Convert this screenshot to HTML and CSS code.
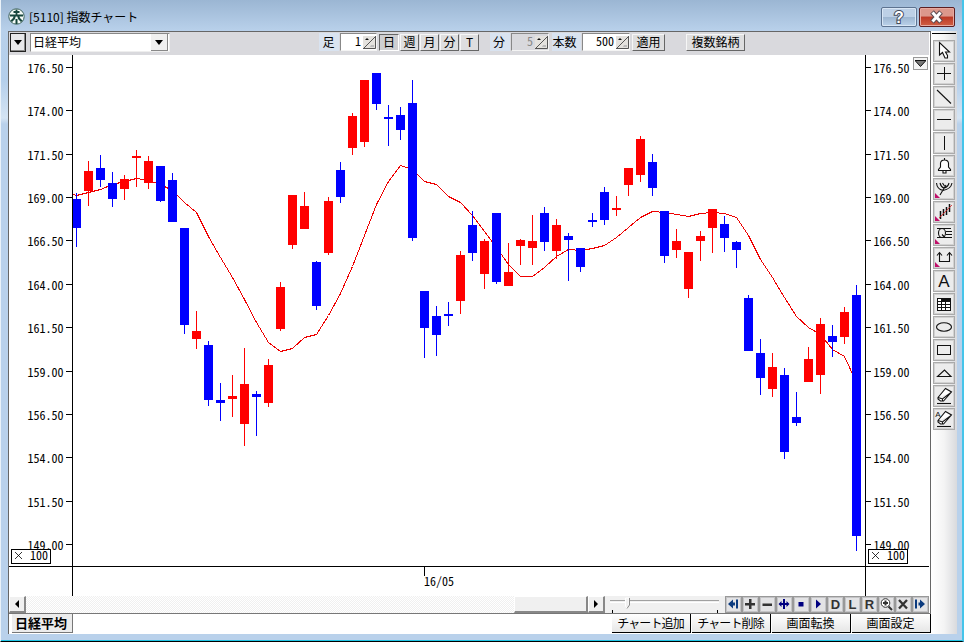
FILE: index.html
```
<!DOCTYPE html>
<html lang="ja">
<head>
  <meta charset="UTF-8">
  <title>[5110] 指数チャート</title>
  <link rel="stylesheet" href="styles.css">
</head>
<body>
  <div class="window">
    <header class="titlebar">
      <svg class="app-icon" width="17" height="17" viewBox="0 0 17 17">
        <circle cx="8.500" cy="8.500" r="7.700" fill="#f4faf6" stroke="#3c625c" stroke-width="1"/>
        <path d="M2 7.500H15M8.500 1.500V7M5.500 4H11.500" fill="none" stroke="#17463d" stroke-width="1.800"/>
        <path d="M6 7H8L7 11L4 14L2.500 12.500L5 10ZM9 7H11L12 10L14.500 12.500L13 14L10 11ZM7.500 11H9.500V16H7.500Z" fill="#17463d"/>
      </svg>
      <h1>[5110] 指数チャート</h1>
      <button class="win-btn help">
        <svg width="34" height="18" viewBox="0 0 34 18"><text x="17" y="15" text-anchor="middle" class="help-mark">?</text></svg>
      </button>
      <button class="win-btn close">
        <svg width="34" height="18" viewBox="0 0 34 18">
          <path d="M12 4L21 14M21 4L12 14" stroke="#5b4a50" stroke-width="5"/>
          <path d="M12.500 4.500L20.500 13.500M20.500 4.500L12.500 13.500" stroke="#fff" stroke-width="3"/>
        </svg>
      </button>
    </header>

    <div class="client">
      <main class="main">
        <div class="toolbar">
          <button class="menu-btn"><i class="arrow down"></i></button>
          <div class="combo"><span>日経平均</span><button><i class="arrow down"></i></button></div>
          <label class="lbl ashi">足</label>
          <div class="spin w37"><span>1</span><svg><use href="#spinner"/></svg></div>
          <button class="tb pressed">日</button>
          <button class="tb">週</button>
          <button class="tb">月</button>
          <button class="tb">分</button>
          <button class="tb">T</button>
          <label class="lbl fun">分</label>
          <div class="spin w38 off"><span>5</span><svg><use href="#spinner"/></svg></div>
          <label class="lbl honsu">本数</label>
          <div class="spin w48"><span>500</span><svg><use href="#spinner"/></svg></div>
          <button class="tb apply">適用</button>
          <button class="tb multi">複数銘柄</button>
        </div>

        <div class="chart">
          <svg id="chart" width="920" height="541" viewBox="9 55 920 541"></svg>
          <button class="chart-menu"><svg width="11" height="7"><path d="M0 .5H11L5.500 6.500Z" fill="#777" stroke="#111"/></svg></button>
        </div>

        <div class="scroll-row">
          <button class="sb"><i class="arrow left"></i></button>
          <div class="track"><div class="thumb"></div></div>
          <button class="sb"><i class="arrow right"></i></button>
          <div class="slider">
            <svg width="120" height="17">
              <path d="M5 4.500H114" stroke="#a0a0a0"/><path d="M5 6.500H114" stroke="#fff"/>
              <path d="M20.500 2V10L22 12.500L24 10V2Z" fill="#f0f0f0" stroke="#fff"/>
              <path d="M24.500 2V9L22 12.500" fill="none" stroke="#888"/>
              <path d="M7.500 14V17M112.500 14V17" stroke="#000"/>
            </svg>
          </div>
          <div class="mini">
            <button><svg><path class="n" d="M2 7L7 2.500V5.500H9V8.500H7V11.500ZM10 2.500H12V11.500H10Z"/></svg></button>
            <button><svg><path class="g" d="M6 2H8.500V6H12V8.500H8.500V12H6V8.500H2V6H6Z"/></svg></button>
            <button><svg><path class="g" d="M2.500 6.500H12V9H2.500Z"/></svg></button>
            <button><svg><path class="b" d="M6 2H8V12H6ZM1.500 7L4.500 4V6H9.500V4L12.500 7L9.500 10V8H4.500V10Z"/></svg></button>
            <button><svg><path class="b" d="M4.500 5H9.500V9.500H4.500Z"/></svg></button>
            <button><svg><path class="b" d="M5 2.500L10 7L5 11.500Z"/></svg></button>
            <button>D</button>
            <button>L</button>
            <button>R</button>
            <button><svg><circle cx="6.500" cy="6" r="4.300" fill="#fff" stroke="#333"/><path d="M4 6H9M6.500 3.500V8.500M9.500 9.500L13 13" stroke="#333" stroke-width="2"/></svg></button>
            <button><svg><path d="M3 3L11 11.500M11 3L3 11.500" stroke="#333" stroke-width="2.300"/></svg></button>
            <button><svg><path class="n" d="M12 7L7 2.500V5.500H5.500V8.500H7V11.500ZM2 2.500H4V11.500H2Z"/></svg></button>
          </div>
        </div>

        <footer class="tabs">
          <div class="tab">日経平均</div>
          <div class="actions">
            <button class="kana">チャート追加</button>
            <button class="kana">チャート削除</button>
            <button>画面転換</button>
            <button>画面設定</button>
          </div>
        </footer>
      </main>

      <aside class="tools">
        <button><svg><path d="M5.500 1.500V14L8.500 11.500L11 17H13.500V14.500L11.500 11H15.500Z" fill="#fff"/></svg></button>
        <button><svg class="px"><path d="M3 9.500H17M10.500 3V16"/></svg></button>
        <button><svg><path d="M3 3L17 16.500"/></svg></button>
        <button><svg class="px"><path d="M3 9.500H17"/></svg></button>
        <button><svg class="px"><path d="M10.500 3V17"/></svg></button>
        <button><svg><path d="M10.500 2V4M4.500 14.500V13.500L6.500 11V7Q7 4 10.500 4T14.500 7V11L16.500 13.500V14.500ZM9 15V17H12V15" fill="#fff"/></svg></button>
        <button><svg><path d="M2.500 4Q3 10 9 11.500Q17 10 18 4M6 4Q7 8 10 9Q14 8 15 4M8.500 4L10.500 7M6 16L12 6"/><use href="#more"/></svg></button>
        <button><svg><path d="M6.500 9V17M9.500 7V14M12.500 5V13M15.500 2V10" stroke-width="1.500"/><path d="M5 16L18 3" stroke="#d22" stroke-width=".8"/><use href="#more"/></svg></button>
        <button><svg><ellipse cx="8" cy="8" rx="3.500" ry="4.500"/><path d="M3 3.500H17M12 6.500H18M12 9.500H18M3 12.500H18M8 9.500L11 12.500"/><use href="#more"/></svg></button>
        <button><svg><path d="M5.500 5V13.500H15.500V5M3 7.500L5.500 4.500L8 7.500M13 7.500L15.500 4.500L18 7.500"/><use href="#more"/></svg></button>
        <button><svg><text x="10" y="16" text-anchor="middle" class="letter">A</text></svg></button>
        <button><svg class="px"><path d="M3 4H17V17H3Z" fill="#111" stroke="none"/><path d="M4 5H7V7H4ZM4 8H7V10H4ZM8 8H11V10H8ZM12 8H16V10H12ZM4 11H7V13H4ZM8 11H11V13H8ZM12 11H16V13H12ZM4 14H7V16H4ZM8 14H11V16H8ZM12 14H16V16H12Z" fill="#fff" stroke="none"/></svg></button>
        <button><svg><ellipse cx="10" cy="10" rx="7.500" ry="4.200"/></svg></button>
        <button><svg class="px"><path d="M3.500 5.500H16.500V14.500H3.500Z"/></svg></button>
        <button><svg><path d="M3.500 13.500H17L10.500 7Z"/></svg></button>
        <button><svg><use href="#eraser"/></svg></button>
        <button><svg><use href="#eraser"/><text x="4" y="8" text-anchor="middle" class="letter small">A</text></svg></button>
      </aside>
    </div>
  </div>

  <svg class="defs">
    <symbol id="spinner" viewBox="0 0 13 13">
      <path d="M0 0H13V13H0Z" fill="#e4e2de"/>
      <path d="M0 12.500H12.500V0M1 12L12 1" fill="none" stroke="#555"/>
      <path d="M2 4H6L4 2Z" fill="#111"/><path d="M8 9H11V11H7Z" fill="#bbb"/>
    </symbol>
    <symbol id="more" viewBox="0 0 20 20"><path d="M1 14L6 19H1Z" fill="#c0106a" stroke="none"/></symbol>
    <symbol id="eraser" viewBox="0 0 20 20">
      <path d="M4 11.500L11.500 2.500L17.500 6L9.500 15H6.500L4 13ZM4 11.500L8.500 13L17 6.500M8.500 13V15" fill="#fff" stroke="#111"/>
      <path d="M3 17.500H17" stroke="#111"/>
    </symbol>
  </svg>
  <script src="chart.js"></script>
</body>
</html>
```
FILE: styles.css
```
* { box-sizing: border-box; }
body {
  margin: 0; overflow: hidden; color: #000;
  font: 12px/14px "Noto Sans CJK JP", sans-serif;
}
button {
  margin: 0; padding: 0; font: inherit; color: #000;
  border: 0; border-radius: 0; display: flex; align-items: center; justify-content: center;
}
.defs { display: none; }

.window {
  width: 964px; height: 642px; padding: 0 5px 6px 7px;
  border-left: 1px solid #eaf2f9; border-right: 2px solid #45c4ea; border-bottom: 1px solid #000;
  background: linear-gradient(#9bb6d3 0, #b8d0ea 30px, #b4cfeb 80px, #d5e4f3 118px, #b9d1eb 124px);
  box-shadow: inset 0 -1px #1fc5e5;
}

/* title bar */
.titlebar { height: 31px; display: flex; align-items: flex-start; }
.app-icon { margin: 8px 0 0 0; }
.titlebar h1 { margin: 9px auto 0 4px; font-size: 12px; font-weight: normal; line-height: 16px; }
.win-btn { width: 36px; height: 20px; margin-top: 7px; border: 1px solid #5d7390; border-radius: 2px; box-shadow: inset 0 0 0 1px #d8e6f5; }
.help { background: linear-gradient(#bdd0e6 50%, #9cb5d0 50%, #bbd2ea); margin-right: 2px; }
.help-mark { font: bold 16px "Liberation Sans", sans-serif; fill: #fff; stroke: #444b5c; stroke-width: 2px; paint-order: stroke; }
.close { background: linear-gradient(#dc988c 45%, #bc3926 50%, #d06044); border-color: #5c1f22; box-shadow: inset 0 0 0 1px #e8aaa0; margin-right: 2px; }

.client { display: flex; height: 603px; }
.main { width: 923px; border-top: 1px solid #666; border-left: 1px solid #666; border-right: 1px solid #666; background: #fff; padding-right: 1px; }

/* toolbar */
.toolbar { height: 23px; background: #d9d9dd; display: flex; align-items: flex-start; padding: 1px 0 0 1px; }
.arrow { display: block; width: 0; height: 0; border: 4px solid transparent; }
.arrow.down { border-top: 5px solid #000; border-bottom: 0; }
.arrow.left { border-right: 4px solid #000; border-left: 0; }
.arrow.right { border-left: 4px solid #000; border-right: 0; }
.menu-btn { width: 16px; height: 19px; background: #e8e8ea; border: 1px solid #222; box-shadow: inset -1px -1px #888; }
.combo {
  width: 140px; height: 19px; margin-left: 4px; padding: 0 1px 0 2px; background: #fff; border: 1px solid #888; border-right-color: #eee; border-bottom-color: #eee;
  display: flex; justify-content: space-between; align-items: stretch;
}
.combo button { width: 17px; background: #f0f0f0; border-right: 1px solid #888; border-bottom: 1px solid #888; }
.combo span { line-height: 15px; }
.lbl { height: 18px; line-height: 17px; text-align: center; background: #d9e3f0; }
.ashi { width: 20px; margin: 0 1px 0 149px; padding-right: 1px; }
.fun { width: 20px; margin: 0 1px 0 10px; padding-right: 2px; }
.honsu { width: 29px; margin: 0 1px 0 3px; padding-right: 4px; }
.spin {
  height: 18px; background: #fff; border: 1px solid #888; border-right-color: #f4f4f4; border-bottom-color: #f4f4f4;
  display: flex; align-items: center; justify-content: flex-end; gap: 2px;
  font-family: "Noto Sans Mono CJK JP", "Liberation Mono", monospace;
}
.spin span { margin-top: -2px; }
.spin svg { width: 13px; height: 13px; }
.spin.off { background: #d9d9dd; color: #888; }
.w37 { width: 37px; margin-right: 2px; }
.w38 { width: 38px; }
.w48 { width: 48px; }
.tb {
  width: 19px; height: 17px; margin: 1px 1px 0 0; padding-bottom: 1px; background: #dededf;
  border: 1px solid #f6f6f6; border-right-color: #666; border-bottom-color: #666; line-height: 14px;
}
.tb.pressed { width: 20px; background: #cfcfd2; border-color: #666 #fff #fff #666; }
.tb.apply { width: 33px; margin-left: 2px; }
.tb.multi { width: 59px; margin-left: 20px; }

/* chart */
.chart { position: relative; height: 541px; }
.chart svg { display: block; }
.chart text { font: 12px "Noto Sans Mono CJK JP", "Liberation Mono", monospace; }
.crisp { shape-rendering: crispEdges; }
.ma { fill: none; stroke: #e00; shape-rendering: crispEdges; }
.axis { fill: none; stroke: #000; shape-rendering: crispEdges; }
.up { fill: #f00; }
.down { fill: #00f; }
.scale { fill: #fff; stroke: #000; }
.chart-menu { position: absolute; right: 1px; top: 2px; width: 15px; height: 13px; background: #f4f4f4; border: 1px solid #999; }

/* scroll row */
.scroll-row { height: 17px; display: flex; background: #f0f0f0; }
.sb { width: 17px; background: #f0f0f0; border: 1px solid #fff; border-right: 2px solid #888; border-bottom: 2px solid #888; }
.track { width: 562px; display: flex; justify-content: flex-end; background: repeating-conic-gradient(#f0f0f0 0 25%, #fff 0 50%) 0 0/2px 2px; }
.thumb { width: 74px; background: #f0f0f0; border: 1px solid #fff; border-right: 2px solid #888; border-bottom: 2px solid #888; }
.slider { width: 120px; }
.slider svg { display: block; }
.mini { display: flex; }
.mini button { width: 17px; height: 17px; background: #e3e3e5; border: 1px solid #999; box-shadow: inset 0 0 0 1px #c4c4c6; font: bold 13px/15px "Liberation Sans", sans-serif; color: #333; }
.mini svg { width: 15px; height: 15px; }
.n { fill: #0b3a7e; }
.b { fill: #000080; }
.g { fill: #333; }

/* bottom tabs */
.tabs { height: 21px; margin-right: -2px; border-top: 1px solid #777; display: flex; justify-content: space-between; }
.tab { width: 61px; height: 19px; margin-left: 3px; padding-right: 2px; background: #ececec; border-right: 1px solid #777; border-bottom: 1px solid #777; font-size: 13px; font-weight: bold; line-height: 17px; text-align: center; white-space: nowrap; }
.actions { display: flex; gap: 1px; background: #fff; }
.actions button { width: 79px; height: 19px; padding-right: 1px; background: linear-gradient(#fff, #e6e6e6); border-right: 1px solid #000; border-bottom: 1px solid #000; }
.actions .kana { letter-spacing: -.9px; }

/* drawing tools */
.tools { width: 27px; padding: 2px 0 0 2px; background: linear-gradient(90deg, #fff, #f4f4f4 50%, #d9dadd); display: flex; flex-direction: column; gap: 1px; }
.tools::before { content: ""; height: 1px; margin: 0 1px 5px -1px; background: #000; }
.tools button { width: 22px; height: 22px; background: #ececec; border: 1px solid #aaa; box-shadow: inset 0 0 0 1px #d2d2d2; }
.tools svg { width: 20px; height: 20px; fill: none; stroke: #111; stroke-width: 1.1; }
.tools .px { shape-rendering: crispEdges; stroke-width: 1; }
.letter { font: 17px "Liberation Sans", sans-serif; fill: #111; stroke: none; }
.letter.small { font-size: 8px; }
```
FILE: chart.js
```
// one row per day: direction, high, body top, body bottom, low (screen y)
const candles = [
  ['down', 193, 199, 228, 247], ['up', 161, 171, 191, 206], ['down', 155, 168, 180, 187],
  ['down', 172, 183, 199, 207], ['up', 175, 179, 189, 200], ['up', 150, 156, 158, 187],
  ['up', 156, 161, 183, 189], ['down', 166, 166, 201, 202], ['down', 173, 180, 222, 222],
  ['down', 228, 228, 325, 334], ['up', 311, 331, 339, 349], ['down', 341, 345, 400, 406],
  ['down', 383, 400, 403, 421], ['up', 375, 396, 399, 417], ['up', 348, 384, 424, 446],
  ['down', 391, 394, 397, 436], ['up', 359, 365, 403, 407], ['up', 282, 287, 329, 331],
  ['up', 195, 195, 245, 249], ['up', 192, 206, 229, 229], ['down', 261, 262, 306, 310],
  ['up', 197, 201, 253, 255], ['down', 162, 170, 197, 203], ['up', 113, 116, 148, 155],
  ['up', 80, 80, 142, 147], ['down', 73, 73, 104, 110], ['down', 105, 117, 119, 146],
  ['down', 107, 115, 130, 140], ['down', 80, 103, 238, 241], ['down', 291, 291, 328, 358],
  ['down', 306, 316, 335, 356], ['down', 302, 314, 316, 326], ['up', 251, 255, 301, 314],
  ['down', 211, 225, 253, 261], ['up', 239, 241, 274, 289], ['down', 213, 213, 282, 284],
  ['up', 243, 272, 286, 286], ['up', 239, 240, 246, 265], ['up', 215, 241, 248, 265],
  ['down', 207, 213, 242, 251], ['up', 219, 225, 251, 259], ['down', 233, 236, 240, 281],
  ['down', 248, 248, 267, 272], ['down', 213, 220, 222, 227], ['down', 187, 192, 220, 225],
  ['up', 196, 208, 210, 216], ['up', 168, 168, 185, 196], ['up', 136, 139, 175, 182],
  ['down', 154, 162, 188, 196], ['down', 211, 211, 256, 263], ['up', 229, 241, 250, 258],
  ['up', 252, 252, 289, 298], ['up', 231, 236, 241, 261], ['up', 209, 209, 228, 253],
  ['down', 216, 224, 238, 252], ['down', 241, 242, 250, 268], ['down', 295, 298, 351, 351],
  ['down', 339, 353, 378, 395], ['up', 353, 367, 389, 397], ['down', 368, 375, 452, 459],
  ['down', 392, 417, 423, 426], ['up', 347, 359, 382, 382], ['up', 318, 324, 375, 394],
  ['down', 325, 336, 342, 357], ['up', 307, 312, 337, 344], ['down', 285, 295, 536, 551]
];
// moving average, one value per day
const average = [
  195, 192, 189, 184, 181, 178, 180, 184, 190, 202, 212, 236, 257, 277, 299, 322, 342, 351, 348, 337,
  334, 315, 293, 266, 235, 204, 181, 165, 169, 181, 184, 196, 202, 215, 231, 247, 264, 276, 276, 267,
  256, 249, 250, 248, 245, 237, 227, 217, 211, 212, 214, 216, 213, 212, 213, 217, 235, 259, 277, 297,
  316, 327, 334, 349, 356, 382
];
const START = 76;
const STEP = 12;

let out = '';
const points = average.map((y, i) => `${START + i * STEP + 0.5},${y + 0.5}`).join(' ');
out += `<polyline class="ma" points="73,194.5 ${points}"/>`;

candles.forEach(([dir, high, top, bottom, low], i) => {
  const x = START + i * STEP;
  out += `<g class="crisp ${dir}"><rect x="${x}" y="${high}" width="1" height="${low - high}"/>`;
  out += `<rect x="${x - 4}" y="${top}" width="9" height="${bottom - top}"/></g>`;
});

// axes
out += '<path class="axis" d="M72.500 55V596M865.500 55V596M9 566.500H929M424.500 567V576"/>';
for (let i = 0; i < 12; i++) {
  const y = Math.round(67 + i * 43.36);
  const label = (176.5 - i * 2.5).toFixed(2);
  out += `<path class="axis" d="M66 ${y + 0.5}H72M866 ${y + 0.5}H871"/>`;
  out += `<text x="27.500" y="${y + 5.5}">${label}</text><text x="873.500" y="${y + 5.5}">${label}</text>`;
}
out += '<text x="424" y="586">16/05</text>';

// scale boxes
[11, 868].forEach((x) => {
  out += `<rect class="scale crisp" x="${x + 0.5}" y="549.5" width="39" height="14"/>`;
  out += `<path d="M${x + 4} 552L${x + 11} 559M${x + 11} 552L${x + 4} 559" stroke="#000" stroke-width=".8"/>`;
  out += `<text x="${x + 19}" y="560">100</text>`;
});

document.getElementById('chart').innerHTML = out;
```
